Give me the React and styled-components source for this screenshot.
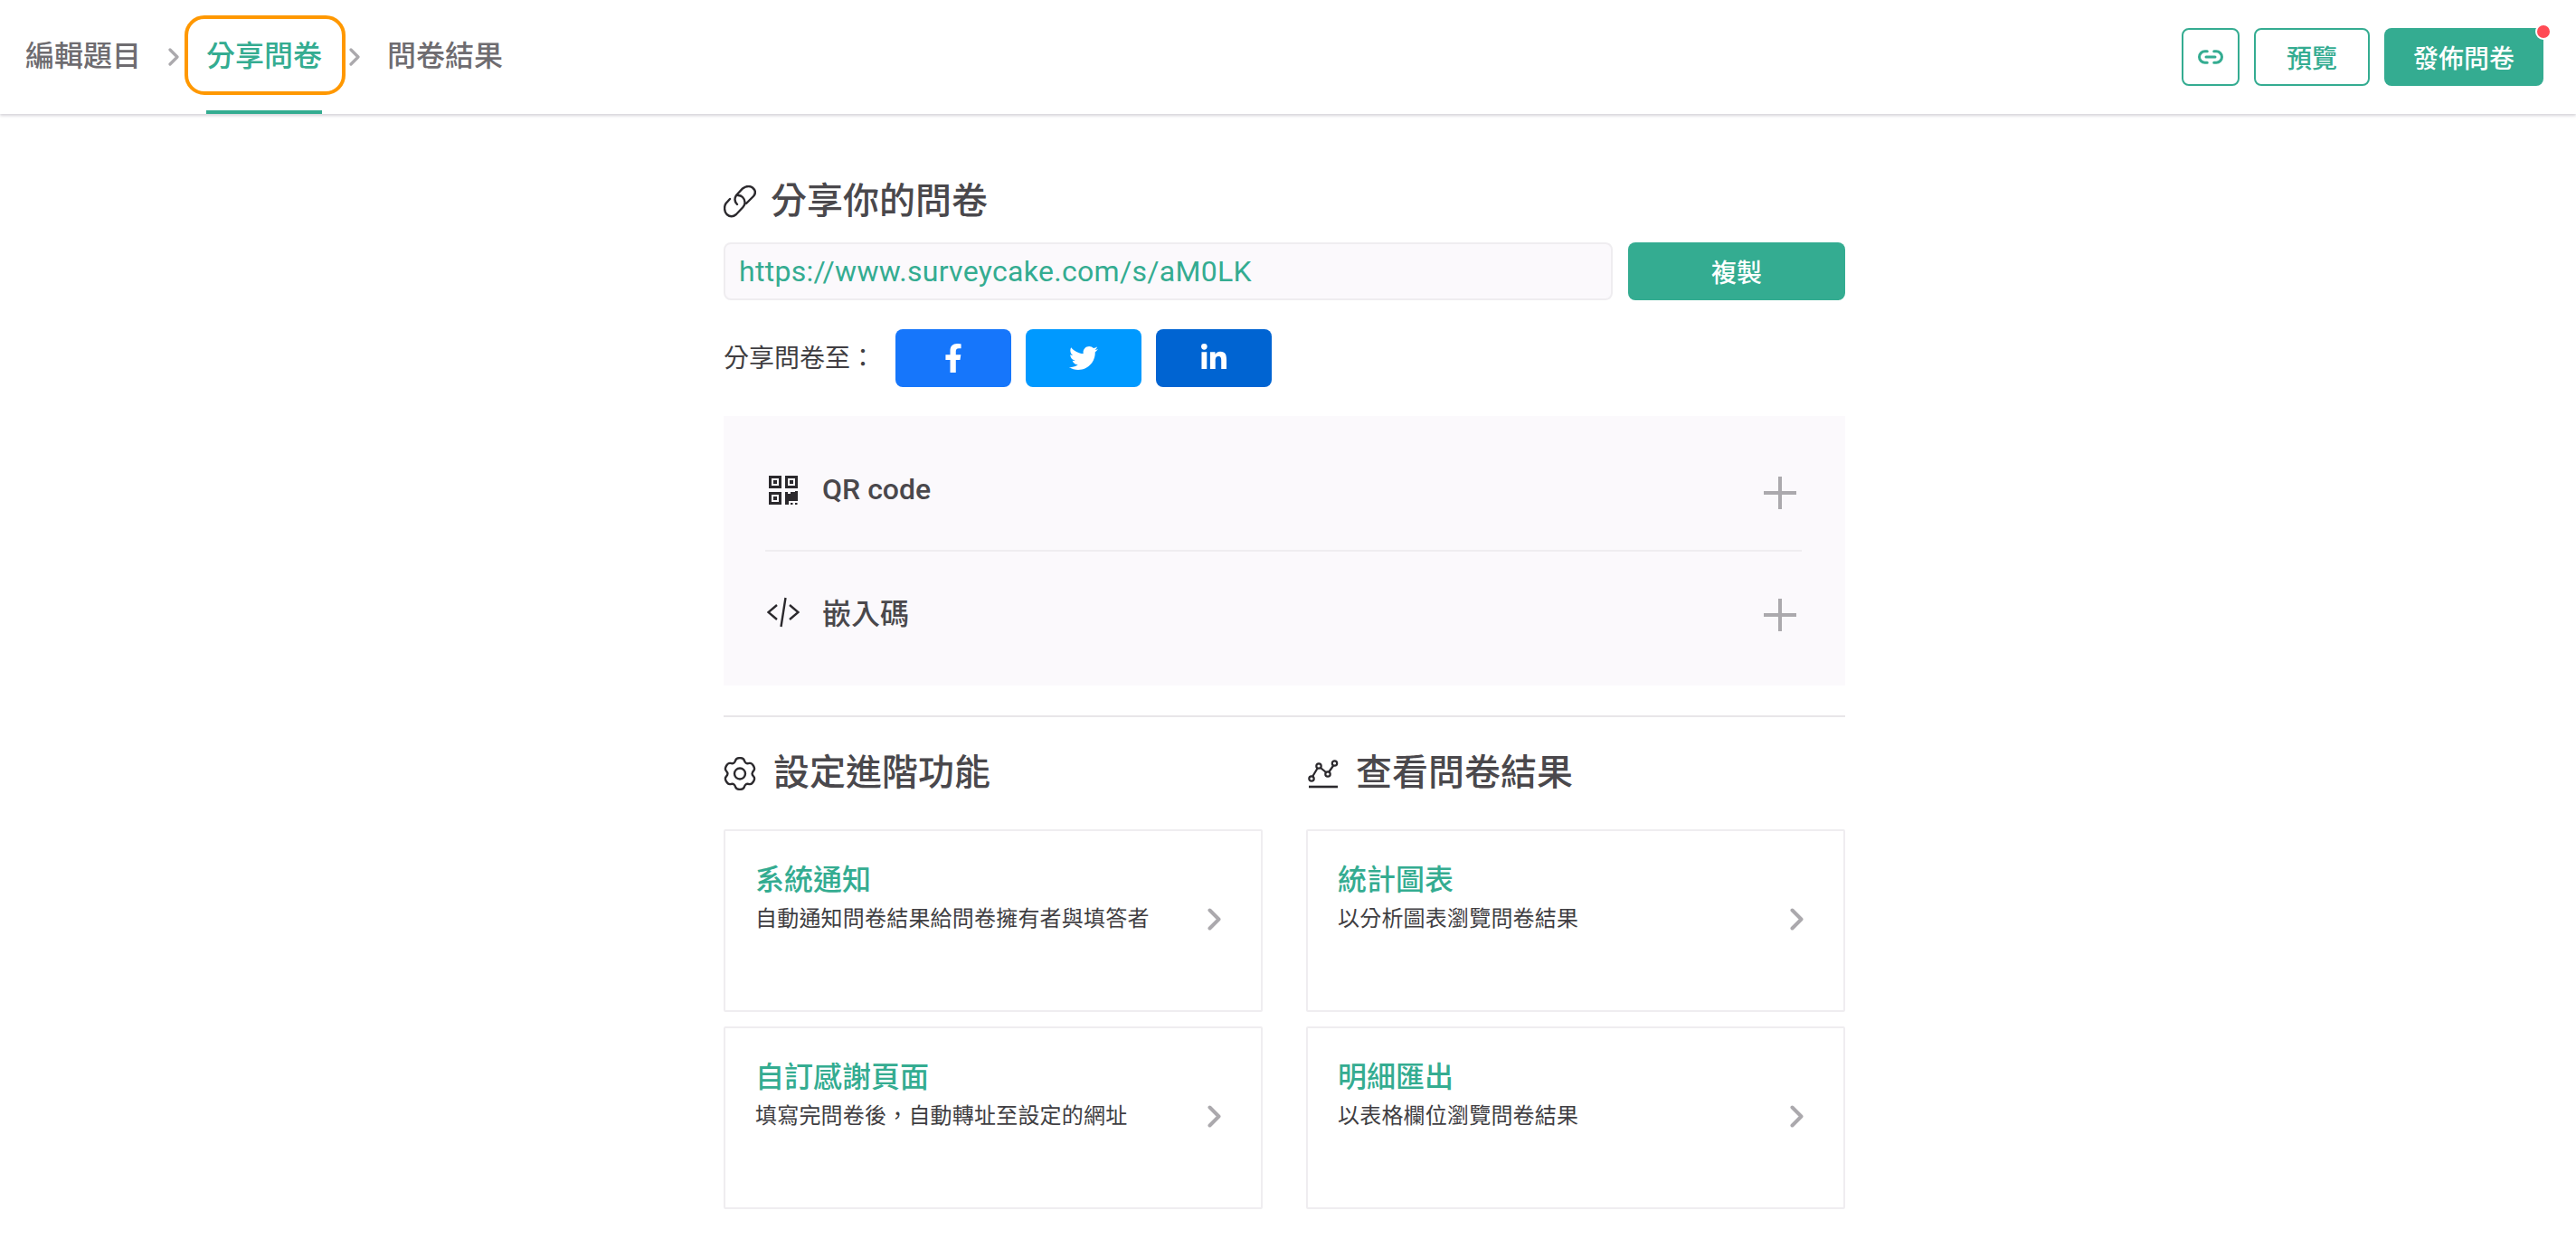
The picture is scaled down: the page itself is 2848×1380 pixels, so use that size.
import React from 'react';
import styled, { createGlobalStyle } from 'styled-components';
import { Link2 } from 'lucide-react';
import { FaFacebookF, FaTwitter, FaLinkedinIn } from 'react-icons/fa';

const green = '#34ac91';
const dark = '#4a484c';
const gray = '#aba9ad';

const GlobalStyle = createGlobalStyle`
  html, body {
    margin: 0;
    padding: 0;
    background: #fff;
    font-family: Roboto, "Noto Sans CJK TC", sans-serif;
    color: ${dark};
  }
  * { box-sizing: border-box; }
`;

const Header = styled.header`
  height: 126px;
  display: flex;
  align-items: center;
  justify-content: space-between;
  padding: 0 36px 0 28px;
  background: #fff;
  box-shadow: 0 2px 3px rgba(70, 60, 80, 0.22);
`;

const Tabs = styled.nav`
  display: flex;
  align-items: center;
  gap: 30px;
`;

const Tab = styled.div`
  position: relative;
  height: 126px;
  display: flex;
  align-items: center;
  padding-bottom: 4px;
  font-size: 32px;
  font-weight: 500;
  color: ${p => (p.$active ? green : '#6e6c70')};
  border-bottom: 4px solid ${p => (p.$active ? green : 'transparent')};
`;

const Highlight = styled.span`
  position: absolute;
  left: -24px;
  top: 17px;
  width: 178px;
  height: 88px;
  border: 4px solid #ff9800;
  border-radius: 22px;
`;

const Actions = styled.div`
  display: flex;
  gap: 16px;
`;

const OutlineButton = styled.button`
  width: ${p => p.$width}px;
  height: 64px;
  display: flex;
  align-items: center;
  justify-content: center;
  padding: 0;
  background: #fff;
  border: 2px solid ${green};
  border-radius: 8px;
  color: ${green};
  font: 500 28px Roboto, "Noto Sans CJK TC", sans-serif;
`;

const PublishButton = styled.button`
  position: relative;
  width: 176px;
  height: 64px;
  padding: 0;
  background: ${green};
  border: 0;
  border-radius: 8px;
  color: #fff;
  font: 500 28px Roboto, "Noto Sans CJK TC", sans-serif;
`;

const Dot = styled.span`
  position: absolute;
  top: -5px;
  right: -9px;
  width: 18px;
  height: 18px;
  background: #ff4b55;
  border: 2px solid #fff;
  border-radius: 50%;
`;

const Main = styled.main`
  width: 1240px;
  margin-left: 800px;
  padding-top: 73px;
`;

const Heading = styled.h2`
  margin: 0;
  height: 48px;
  display: flex;
  align-items: center;
  gap: ${p => p.$gap}px;
  font-size: 40px;
  line-height: 48px;
  font-weight: 500;
  color: ${dark};
`;

const LinkRow = styled.div`
  display: flex;
  gap: 17px;
  margin-top: 21px;
`;

const UrlBox = styled.div`
  flex: 1;
  height: 64px;
  display: flex;
  align-items: center;
  padding-left: 15px;
  background: #fbf9fc;
  border: 2px solid #efedf0;
  border-radius: 8px;
  font-size: 32px;
  letter-spacing: 0.3px;
  color: ${green};
`;

const CopyButton = styled.button`
  width: 240px;
  height: 64px;
  padding: 0;
  background: ${green};
  border: 0;
  border-radius: 8px;
  color: #fff;
  font: 500 28px Roboto, "Noto Sans CJK TC", sans-serif;
`;

const ShareRow = styled.div`
  display: flex;
  align-items: center;
  margin-top: 32px;
`;

const ShareLabel = styled.span`
  width: 190px;
  padding-bottom: 5px;
  font-size: 28px;
  font-weight: 400;
  color: #403e42;
`;

const SocialList = styled.div`
  display: flex;
  gap: 16px;
`;

const SocialButton = styled.button`
  width: 128px;
  height: 64px;
  display: flex;
  align-items: center;
  justify-content: center;
  padding: 0;
  border: 0;
  border-radius: 8px;
  background: ${p => p.$color};
  color: #fff;
  font-size: 32px;
`;

const Panel = styled.section`
  margin-top: 32px;
  padding: 16px 48px 14px 46px;
  background: #fbf9fc;
`;

const PanelRow = styled.div`
  height: 134px;
  display: flex;
  align-items: center;
  gap: 25px;
  padding: 0 6px 0 2px;
  border-bottom: ${p => (p.$divided ? '2px solid #efedf0' : '0')};
`;

const IconSlot = styled.span`
  width: 36px;
  display: flex;
  justify-content: center;
`;

const PanelLabel = styled.span`
  flex: 1;
  padding-bottom: 2px;
  font-size: 32px;
  font-weight: 500;
`;

const PlusIcon = styled.svg`
  margin-top: 6px;
`;

const Rule = styled.hr`
  margin: 33px 0 0;
  height: 2px;
  background: #e8e6e9;
  border: 0;
`;

const Columns = styled.div`
  display: grid;
  grid-template-columns: 596px 596px;
  gap: 48px;
  margin-top: 38px;
`;

const CardList = styled.div`
  display: flex;
  flex-direction: column;
  gap: 16px;
  margin-top: 38px;
`;

const Card = styled.a`
  display: block;
  height: 202px;
  padding: 32px 44px 0 33px;
  background: #fff;
  border: 2px solid #efedf0;
  border-radius: 2px;
`;

const CardTitle = styled.div`
  font-size: 32px;
  line-height: 44px;
  font-weight: 500;
  color: ${green};
`;

const CardText = styled.div`
  display: flex;
  align-items: center;
  justify-content: space-between;
  height: 36px;
  font-size: 24px;
  letter-spacing: 0.2px;
  font-weight: 400;
  color: #403e42;

  svg {
    margin-top: 6px;
  }
`;

const Chevron = ({ w = 15, h = 25 }) => (
  <svg width={w} height={h} viewBox="0 0 15 25" fill="none">
    <path d="M2.5 2.5L12.5 12.5L2.5 22.5" stroke={gray} strokeWidth="4" strokeLinecap="round" strokeLinejoin="round" />
  </svg>
);

const ChainIcon = () => (
  <svg width="36" height="36" viewBox="0 0 36 36" fill="none" stroke="#2b292d" strokeWidth="2.4" strokeLinecap="round">
    <path d="M15 21C12 18 11.5 15 14 11L21 3.5C25 .5 29 .5 32 2.5C35.5 5.5 35.5 9 33 12L25 20" />
    <path d="M7 15L2.5 20C.5 23 .5 29 3.5 32C7 35 11 34.5 14 32L21.5 24C24.5 21 24 16 21 13C19.5 11.5 18 11 16 11" />
  </svg>
);

const QrIcon = () => (
  <svg width="32" height="32" viewBox="0 0 32 32" fill="#2b292d">
    <path fillRule="evenodd" d="M0 0h14v14H0zM3 3v8h8V3zM18 0h14v14H18zM21 3v8h8V3zM0 18h14v14H0zM3 21v8h8v-8z" />
    <rect x="5" y="5" width="4" height="4" />
    <rect x="23" y="5" width="4" height="4" />
    <rect x="5" y="23" width="4" height="4" />
    <path d="M18 18h3v2h3v-2h5v-1h3v11h-10v4h-4z" />
    <rect x="24" y="30" width="2.5" height="2" />
    <rect x="29" y="30" width="2.5" height="2" />
  </svg>
);

const CodeIcon = () => (
  <svg width="36" height="34" viewBox="0 0 36 34" fill="none" stroke="#2b292d" strokeWidth="2.4">
    <path d="M11 9L1.5 17L11 25M25 9L34.5 17L25 25M20.5 1L15.5 33" />
  </svg>
);

const PlusGlyph = () => (
  <PlusIcon width="36" height="36" viewBox="0 0 36 36" fill="none" stroke={gray} strokeWidth="4">
    <path d="M18 0V36M0 18H36" />
  </PlusIcon>
);

// six rounded teeth, one pointing straight up
const gearPath = (() => {
  const pts = [];
  for (let k = 0; k < 6; k++) {
    const a = -90 + k * 60;
    [[13.6, a - 24], [17.8, a - 13], [17.8, a + 13], [13.6, a + 24]].forEach(([r, deg]) => {
      const rad = (deg * Math.PI) / 180;
      pts.push([18 + r * Math.cos(rad), 18.5 + r * Math.sin(rad)]);
    });
  }
  const mid = (p, q) => [(p[0] + q[0]) / 2, (p[1] + q[1]) / 2];
  const fmt = p => `${p[0].toFixed(2)} ${p[1].toFixed(2)}`;
  let d = `M${fmt(mid(pts[pts.length - 1], pts[0]))}`;
  pts.forEach((p, i) => {
    d += `Q${fmt(p)} ${fmt(mid(p, pts[(i + 1) % pts.length]))}`;
  });
  return d + 'Z';
})();

const GearIcon = () => (
  <svg width="36" height="37" viewBox="0 0 36 37" fill="none" stroke="#2b292d" strokeWidth="2.4">
    <path d={gearPath} />
    <circle cx="18" cy="18.5" r="6" />
  </svg>
);

const ChartIcon = () => (
  <svg width="36" height="34" viewBox="0 0 36 34" fill="none" stroke="#2b292d" strokeWidth="2.2">
    <circle cx="6" cy="23" r="2.7" />
    <circle cx="14" cy="9" r="2.7" />
    <circle cx="24" cy="18" r="2.7" />
    <circle cx="31.5" cy="6" r="2.7" />
    <path d="M7.2 20.5L12.6 11.5M16 11L22 16M25.3 15.5L30.2 8.5" />
    <path d="M3 32H35" strokeWidth="2.6" />
  </svg>
);

const cardsLeft = [
  { title: '系統通知', text: '自動通知問卷結果給問卷擁有者與填答者' },
  { title: '自訂感謝頁面', text: '填寫完問卷後，自動轉址至設定的網址' }
];

const cardsRight = [
  { title: '統計圖表', text: '以分析圖表瀏覽問卷結果' },
  { title: '明細匯出', text: '以表格欄位瀏覽問卷結果' }
];

const CardColumn = ({ icon, title, cards }) => (
  <div>
    <Heading $gap={19}>
      <IconSlot>{icon}</IconSlot>
      {title}
    </Heading>
    <CardList>
      {cards.map(card => (
        <Card key={card.title}>
          <CardTitle>{card.title}</CardTitle>
          <CardText>
            {card.text}
            <Chevron />
          </CardText>
        </Card>
      ))}
    </CardList>
  </div>
);

export default function App() {
  return (
    <>
      <GlobalStyle />
      <Header>
        <Tabs>
          <Tab>編輯題目</Tab>
          <Chevron w={12} h={22} />
          <Tab $active>
            分享問卷
            <Highlight />
          </Tab>
          <Chevron w={12} h={22} />
          <Tab>問卷結果</Tab>
        </Tabs>
        <Actions>
          <OutlineButton $width={64}>
            <Link2 size={30} strokeWidth={2.4} />
          </OutlineButton>
          <OutlineButton $width={128}>預覽</OutlineButton>
          <PublishButton>
            發佈問卷
            <Dot />
          </PublishButton>
        </Actions>
      </Header>
      <Main>
        <Heading $gap={16}>
          <IconSlot><ChainIcon /></IconSlot>
          分享你的問卷
        </Heading>
        <LinkRow>
          <UrlBox>https://www.surveycake.com/s/aM0LK</UrlBox>
          <CopyButton>複製</CopyButton>
        </LinkRow>
        <ShareRow>
          <ShareLabel>分享問卷至：</ShareLabel>
          <SocialList>
            <SocialButton $color="#1676fb"><FaFacebookF /></SocialButton>
            <SocialButton $color="#0099ff"><FaTwitter /></SocialButton>
            <SocialButton $color="#0064d2"><FaLinkedinIn /></SocialButton>
          </SocialList>
        </ShareRow>
        <Panel>
          <PanelRow $divided>
            <IconSlot><QrIcon /></IconSlot>
            <PanelLabel>QR code</PanelLabel>
            <PlusGlyph />
          </PanelRow>
          <PanelRow>
            <IconSlot><CodeIcon /></IconSlot>
            <PanelLabel>嵌入碼</PanelLabel>
            <PlusGlyph />
          </PanelRow>
        </Panel>
        <Rule />
        <Columns>
          <CardColumn icon={<GearIcon />} title="設定進階功能" cards={cardsLeft} />
          <CardColumn icon={<ChartIcon />} title="查看問卷結果" cards={cardsRight} />
        </Columns>
      </Main>
    </>
  );
}
